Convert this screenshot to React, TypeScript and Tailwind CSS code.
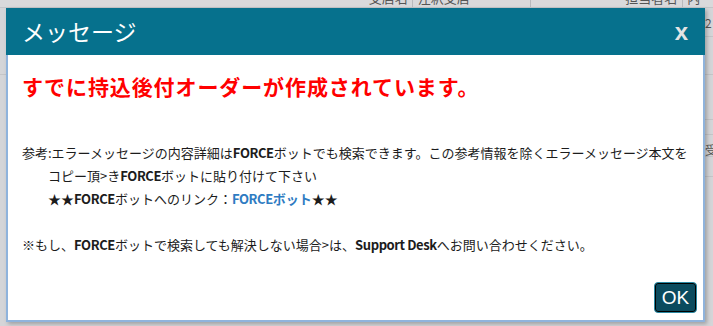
import React from 'react';

const jp = { fontFamily: '"Noto Sans CJK JP", "Noto Sans", sans-serif' };

const Force: React.FC = () => <span className="font-bold tracking-[-0.4px]">FORCE</span>;

export default function App() {
  return (
    <div className="relative w-[713px] h-[326px] overflow-hidden bg-[#d4d5d8]" style={jp}>
      {/* dimmed page behind the modal */}
      <div className="h-[8px] overflow-hidden bg-[#d9d9db] border-b border-[#c4c5c8]">
        <div className="-mt-[12px] flex h-[20px] text-[13px] leading-[20px] text-[#555]">
          <div className="w-[415px] pr-[4px] text-right border-r border-[#b9babd]">支店名</div>
          <div className="w-[119px] pl-[5px] border-r border-[#b9babd]">注釈支店</div>
          <div className="w-[153px] pr-[5px] text-right border-r border-[#b9babd]">担当者名</div>
          <div className="pl-[4px]">内容</div>
        </div>
      </div>
      <div className="h-[29px] border-b border-[#c4c5c8] ml-auto w-[20px] pl-[12px] text-[12px] leading-[29px] text-[#555]">2</div>
      <div className="h-[38px] border-b border-[#c4c5c8]" />
      <div className="h-[45px] border-b border-[#c4c5c8] ml-auto w-[20px]" />
      <div className="h-[15px] border-b border-[#c4c5c8] ml-auto w-[20px]" />
      <div className="h-[22px] border-b border-[#c4c5c8] ml-auto w-[20px] pl-[12px] text-[12px] leading-[30px] text-[#555]">受</div>
      <div className="h-[20px] border-b border-[#c4c5c8] ml-auto w-[20px]" />

      {/* modal */}
      <div className="absolute left-[6px] top-[8px] w-[699px] h-[314px] flex flex-col bg-white border-x-2 border-b-2 border-[#8fb3dc] shadow-[2px_2px_4px_rgba(0,0,0,0.25)]">
        <div className="h-[47px] -mx-[2px] flex items-center justify-between bg-[#06718d] pl-[16px] pr-[17px]">
          <span className="text-[23px] leading-none text-white">メッセージ</span>
          <span className="text-[24px] leading-none font-bold text-[#e4e4e4]" style={{ fontFamily: '"Liberation Sans", Arial, sans-serif' }}>
            x
          </span>
        </div>

        <div className="px-[14px] pt-[16px]">
          <div className="text-[21px] leading-[30px] font-bold tracking-[0.9px] text-[#ff0000]">
            すでに持込後付オーダーが作成されています。
          </div>

          <div className="mt-[40px] text-[13px] leading-[23px] text-[#1c1c1c]">
            <div className="whitespace-nowrap">
              参考:エラーメッセージの内容詳細は<Force />ボットでも検索できます。この参考情報を除くエラーメッセージ本文を
            </div>
            <div className="pl-[26px] whitespace-nowrap">
              コピー頂&gt;き<Force />ボットに貼り付けて下さい
            </div>
            <div className="pl-[26px] whitespace-nowrap">
              ★★<Force />ボットへのリンク：
              <span className="font-bold text-[#2e7bc2]">
                <span className="tracking-[-0.4px]">FORCE</span>ボット
              </span>
              ★★
            </div>
            <div className="h-[23px]" />
            <div className="whitespace-nowrap">
              ※もし、<Force />ボットで検索しても解決しない場合&gt;は、
              <span className="font-bold tracking-[-0.4px]">Support Desk</span>へお問い合わせください。
            </div>
          </div>
        </div>

        <div className="mt-auto flex justify-end pr-[6px] pb-[7px]">
          <button
            className="w-[43px] h-[31px] rounded-[4px] border border-[#2a89a3] bg-[#0b4b5e] shadow-[inset_0_0_0_1px_#000] text-[19px] leading-none text-white"
            style={{ fontFamily: '"Liberation Sans", Arial, sans-serif' }}
          >
            OK
          </button>
        </div>
      </div>
    </div>
  );
}
